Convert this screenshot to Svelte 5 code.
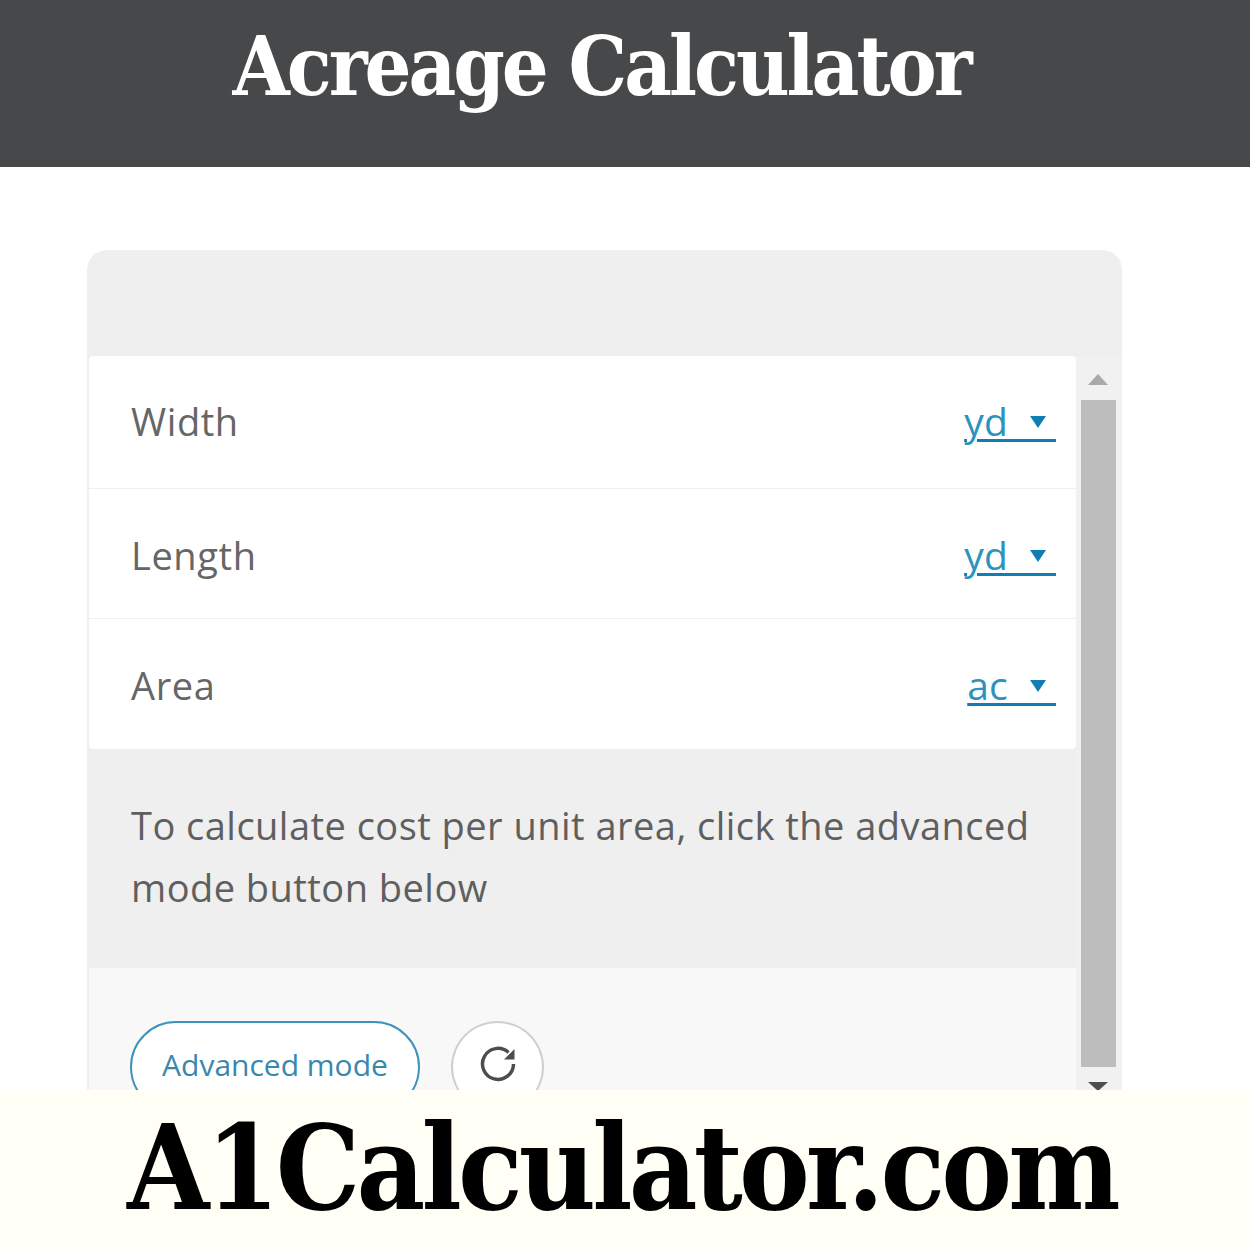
<script lang="ts">
    type Row = { label: string; unit: string };

    const rows: Row[] = [
        { label: 'Width', unit: 'yd' },
        { label: 'Length', unit: 'yd' },
        { label: 'Area', unit: 'ac' }
    ];
</script>

<div class="page">
    <header class="top">
        <h1>Acreage Calculator</h1>
    </header>

    <main class="main">
        <section class="card">
            <div class="card-head"></div>

            <div class="card-body">
                <div class="content">
                    <div class="rows">
                        {#each rows as row}
                            <div class="row">
                                <span class="label">{row.label}</span>
                                <span class="unit">{row.unit}&nbsp;&nbsp;&nbsp;&nbsp;&thinsp;<i class="caret"></i></span>
                            </div>
                        {/each}
                    </div>

                    <p class="note">To calculate cost per unit area, click the advanced mode button below</p>

                    <div class="actions">
                        <button class="pill">Advanced mode</button>
                        <button class="round" aria-label="Reset">
                            <svg width="38" height="38" viewBox="0 0 38 38" fill="none">
                                <path d="M29.5 7.5A15.5 15.5 0 1 0 34.5 19" stroke="#4d4d4d" stroke-width="3.5" />
                                <path d="M35.5 4V14.5H25z" fill="#4d4d4d" />
                            </svg>
                        </button>
                    </div>
                </div>

                <div class="scrollbar">
                    <i class="arrow up"></i>
                    <div class="thumb"></div>
                    <i class="arrow down"></i>
                </div>
            </div>
        </section>
    </main>

    <footer class="brand">A1Calculator.com</footer>
</div>

<style>
    :global(body) {
        margin: 0;
        background: #fff;
    }

    .page {
        width: 1250px;
        height: 1250px;
        display: flex;
        flex-direction: column;
        overflow: hidden;
        font-family: "Open Sans", "Noto Sans", sans-serif;
    }

    .top {
        height: 167px;
        flex: none;
        display: flex;
        align-items: center;
        justify-content: center;
        background: #47484a;
    }

    h1 {
        margin: 0 48px 35px 0;
        font-family: "DejaVu Serif Condensed", "DejaVu Serif", serif;
        font-stretch: condensed;
        font-size: 82px;
        line-height: 90px;
        font-weight: 700;
        letter-spacing: -3px;
        color: #fff;
    }

    .main {
        height: 923px;
        flex: none;
        overflow: hidden;
        padding: 83px 128px 0 87px;
        box-sizing: border-box;
    }

    .card {
        height: 900px;
        background: #efefef;
        border-radius: 20px 20px 0 0;
    }

    .card-head {
        height: 106px;
    }

    .card-body {
        display: flex;
        padding-left: 2px;
    }

    .content {
        width: 987px;
        flex: none;
    }

    .rows {
        background: #fff;
        border-radius: 4px;
    }

    .row {
        height: 130px;
        display: flex;
        align-items: center;
        justify-content: space-between;
        padding: 2px 20px 0 42px;
        border-bottom: 1px solid #efefef;
        box-sizing: border-box;
    }

    .row:first-child {
        height: 133px;
        padding: 0 20px 2px 42px;
    }

    .row:nth-child(2) {
        padding-top: 3px;
    }

    .row:last-child {
        border-bottom: 0;
    }

    .label {
        font-size: 38px;
        letter-spacing: 0.6px;
        color: #666;
    }

    .unit {
        position: relative;
        font-size: 39px;
        letter-spacing: 0.2px;
        line-height: 44px;
        color: #2b93bd;
        text-decoration: underline 3px #0f7fb3;
        text-underline-offset: 3px;
    }

    .caret {
        position: absolute;
        right: 10px;
        top: 17px;
        width: 0;
        height: 0;
        border-left: 8px solid transparent;
        border-right: 8px solid transparent;
        border-top: 12px solid #0f7fb3;
    }

    .note {
        height: 219px;
        margin: 0;
        padding: 45px 30px 0 42px;
        box-sizing: border-box;
        font-size: 38px;
        letter-spacing: 0.47px;
        line-height: 62px;
        color: #5f5f5f;
    }

    .actions {
        height: 300px;
        display: flex;
        align-items: flex-start;
        gap: 31px;
        padding: 53px 0 0 41px;
        box-sizing: border-box;
        background: #f8f8f8;
    }

    .pill {
        width: 290px;
        height: 92px;
        padding: 0 0 5px;
        border: 2px solid #3f93ba;
        border-radius: 46px;
        background: #fff;
        font-family: inherit;
        font-size: 30px;
        color: #3a87ad;
    }

    .round {
        width: 93px;
        height: 92px;
        padding: 0 0 7px;
        border: 2px solid #cfcfcf;
        border-radius: 50%;
        background: #fff;
        display: flex;
        align-items: center;
        justify-content: center;
    }

    .scrollbar {
        width: 46px;
        flex: none;
        height: 740px;
        padding-right: 2px;
        box-sizing: border-box;
        background: #f1f1f1;
        display: flex;
        flex-direction: column;
        align-items: center;
    }

    .thumb {
        width: 35px;
        height: 667px;
        margin: 15px 0 15px;
        background: #bdbdbd;
    }

    .arrow {
        width: 0;
        height: 0;
        border-left: 10px solid transparent;
        border-right: 10px solid transparent;
    }

    .arrow.up {
        margin-top: 18px;
        border-bottom: 11px solid #a9a9a9;
    }

    .arrow.down {
        border-top: 9px solid #4d4d4d;
    }

    .brand {
        height: 160px;
        flex: none;
        display: flex;
        align-items: center;
        justify-content: center;
        padding: 0 6px 6px 0;
        box-sizing: border-box;
        background: #fffff6;
        font-family: "DejaVu Serif Condensed", "DejaVu Serif", serif;
        font-stretch: condensed;
        font-size: 118px;
        font-weight: 700;
        letter-spacing: -3.8px;
        color: #000;
    }
</style>
